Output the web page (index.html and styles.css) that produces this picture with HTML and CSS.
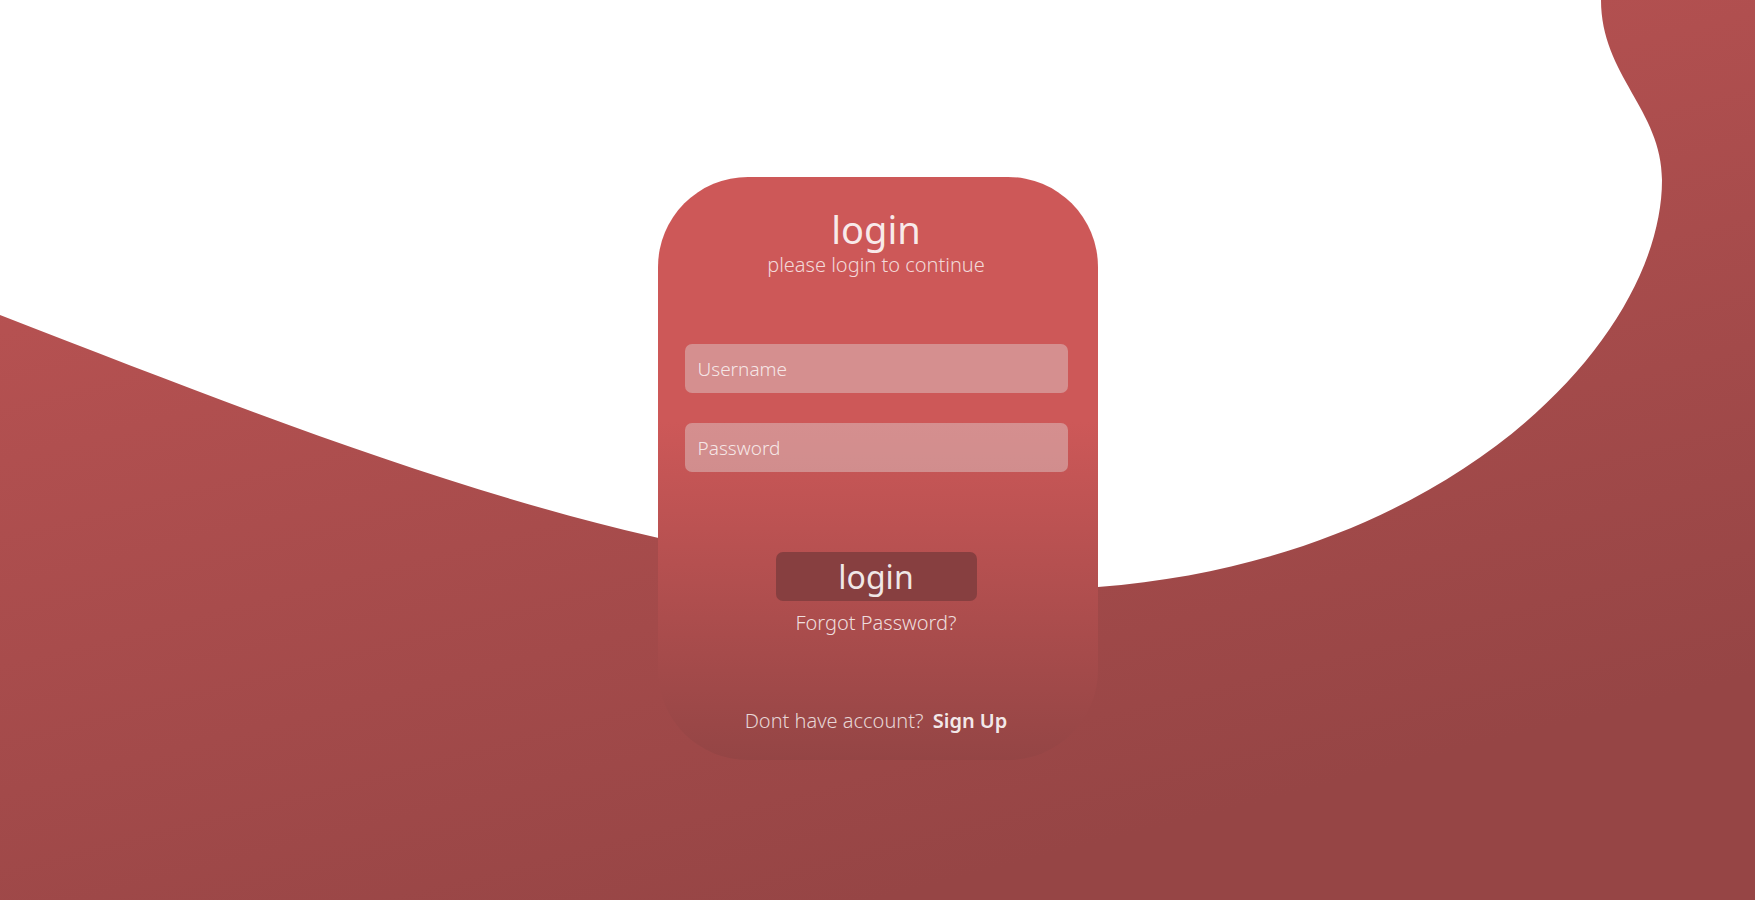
FILE: index.html
```html
<!DOCTYPE html>
<html lang="en">
<head>
<meta charset="utf-8">
<title>Login</title>
<link rel="stylesheet" href="styles.css">
</head>
<body>
<svg class="bg" viewBox="0 0 1755 900" preserveAspectRatio="none" aria-hidden="true">
  <defs>
    <linearGradient id="blob" x1="0" y1="0" x2="0.5" y2="1">
      <stop offset="0" stop-color="#c25656"/>
      <stop offset="1" stop-color="#964545"/>
    </linearGradient>
  </defs>
  <path fill="url(#blob)" d="M0 315 C400 470 700 590 1098 587 C1450 560 1662 340 1662 180 C1662 110 1601 75 1601 0 L1755 0 L1755 900 L0 900 Z"/>
</svg>
<main class="card">
  <h1 class="title">login</h1>
  <p class="subtitle">please login to continue</p>
  <form class="form">
    <input class="field" type="text" placeholder="Username">
    <input class="field" type="password" placeholder="Password">
    <button class="btn" type="button">login</button>
  </form>
  <a class="forgot" href="#">Forgot Password?</a>
  <p class="footer">Dont have account? <a class="signup" href="#">Sign Up</a></p>
</main>
</body>
</html>
```
FILE: styles.css
```css
* { box-sizing: border-box; }
html, body { margin: 0; height: 100%; }
body {
  background: #ffffff;
  overflow: hidden;
  display: flex;
  flex-direction: column;
  align-items: center;
  font-family: "Noto Sans", "Open Sans", sans-serif;
  color: rgba(255,255,255,0.85);
}
.bg {
  position: absolute;
  left: 0; top: 0;
  width: 1755px; height: 900px;
  z-index: 0;
}
.card {
  position: relative;
  z-index: 1;
  margin-top: 177px;
  width: 440px;
  height: 583px;
  border-radius: 90px;
  background: linear-gradient(to bottom, #cd5858 0%, #cd5858 42%, #944545 100%);
  display: flex;
  flex-direction: column;
  align-items: center;
  padding: 30px 30px 0 27px;
}
.title {
  margin: 0;
  font-size: 38px;
  font-weight: 400;
  line-height: 44px;
  color: rgba(255,255,255,0.88);
}
.subtitle {
  margin: 1px 0 0;
  font-size: 20px;
  font-weight: 300;
  line-height: 26px;
  color: rgba(255,255,255,0.78);
}
.form {
  width: 100%;
  display: flex;
  flex-direction: column;
  align-items: center;
  margin-top: 66px;
}
.field {
  width: 100%;
  height: 49px;
  border: none;
  border-radius: 7px;
  background: rgba(225,210,210,0.45);
  padding: 0 13px;
  font-family: inherit;
  font-size: 19px;
  font-weight: 300;
  color: #fff;
  outline: none;
}
.field::placeholder { color: rgba(255,255,255,0.8); }
.field + .field { margin-top: 30px; }
.btn {
  margin-top: 80px;
  width: 201px;
  height: 49px;
  border: none;
  border-radius: 7px;
  background: #873f40;
  font-family: inherit;
  font-size: 32px;
  font-weight: 400;
  line-height: 49px;
  color: rgba(255,255,255,0.88);
  padding: 0;
}
.forgot {
  margin-top: 8px;
  font-size: 20px;
  font-weight: 300;
  line-height: 28px;
  color: rgba(255,255,255,0.82);
  text-decoration: none;
}
.footer {
  margin: 70px 0 0;
  font-size: 20px;
  font-weight: 300;
  line-height: 28px;
  color: rgba(255,255,255,0.78);
}
.signup {
  margin-left: 4px;
  font-weight: 600;
  color: rgba(255,255,255,0.9);
  text-decoration: none;
}
```
